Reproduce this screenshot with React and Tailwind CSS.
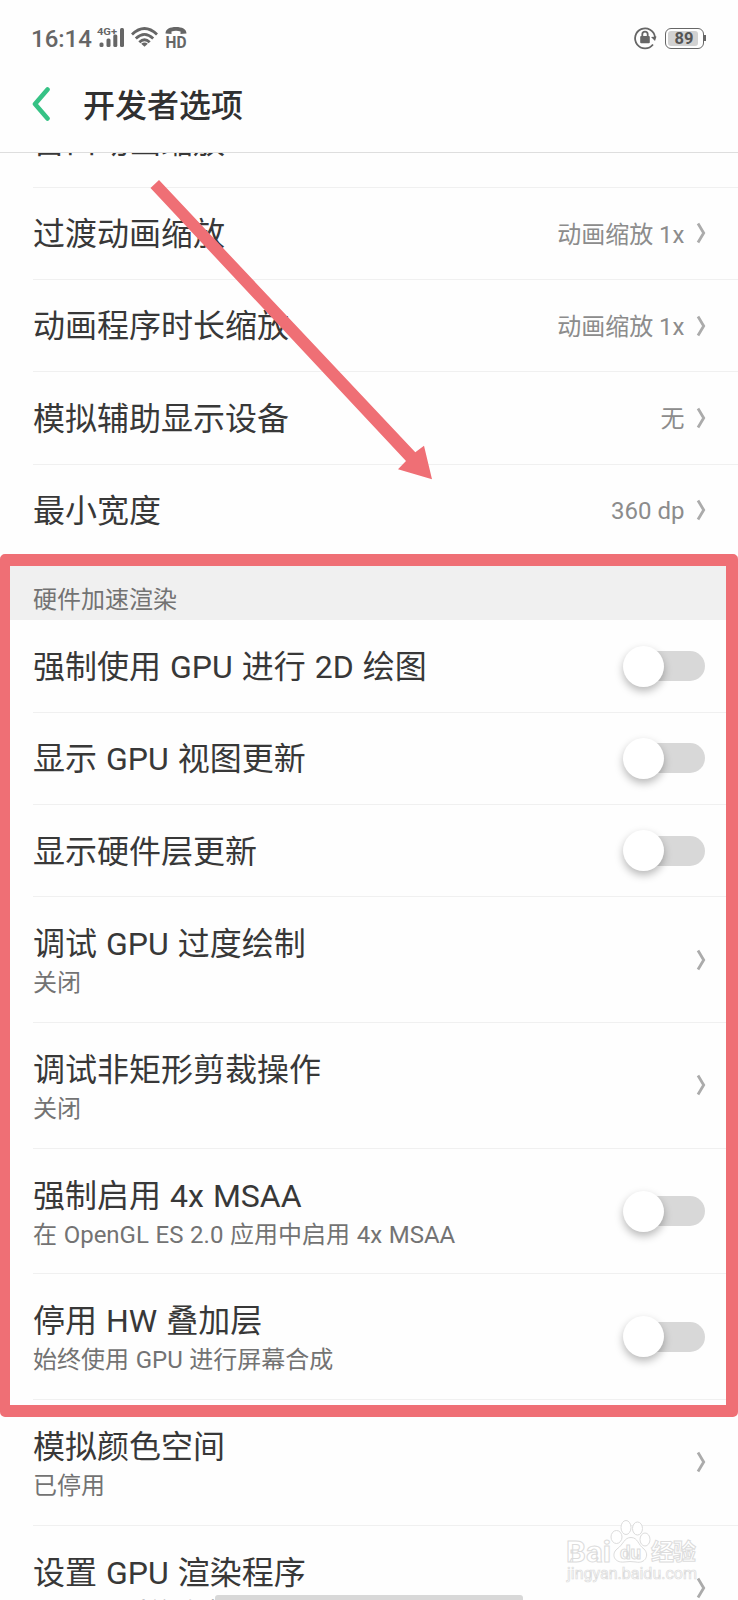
import React from "react";

const rows = [
   { title: "窗口动画缩放", value: "动画缩放 1x" },
   { title: "过渡动画缩放", value: "动画缩放 1x" },
   { title: "动画程序时长缩放", value: "动画缩放 1x" },
   { title: "模拟辅助显示设备", value: "无" },
   { title: "最小宽度", value: "360 dp" },
];

const switches = ["强制使用 GPU 进行 2D 绘图", "显示 GPU 视图更新", "显示硬件层更新"];

const details = [
   { title: "调试 GPU 过度绘制", sub: "关闭" },
   { title: "调试非矩形剪裁操作", sub: "关闭" },
   { title: "强制启用 4x MSAA", sub: "在 OpenGL ES 2.0 应用中启用 4x MSAA", toggle: true },
   { title: "停用 HW 叠加层", sub: "始终使用 GPU 进行屏幕合成", toggle: true },
   { title: "模拟颜色空间", sub: "已停用" },
   { title: "设置 GPU 渲染程序", sub: "OpenGL 系统默认" },
];

function Chevron() {
   return (
      <svg className="h-[22px] w-[10px] shrink-0" viewBox="0 0 10 22" fill="none" stroke="#ababab" strokeWidth="2.8">
         <path d="M2 1.5L7.7 11L2 20.5" />
      </svg>
   );
}

function Toggle() {
   return (
      <div className="mr-[0.5px] flex h-[30px] w-[82px] shrink-0 items-center">
         <div className="z-10 size-[41px] shrink-0 rounded-full bg-white shadow-[0_4px_8px_rgba(0,0,0,0.28)]" />
         <div className="-ml-[30px] h-[30px] w-[71px] rounded-full bg-[#d8d8d8]" />
      </div>
   );
}

function Row({ title, value, toggle }) {
   return (
      <div className="ml-[33px] flex h-[92.3px] shrink-0 items-center justify-between border-b border-[#f0f0f0] pr-[32.5px]">
         <div className="pt-[1.6px] text-[32px] leading-[40px] text-[#383838] [word-spacing:1.1px]">{title}</div>
         {toggle ? (
            <Toggle />
         ) : (
            <div className="flex items-center gap-[11px]">
               <span className="pt-[2.4px] text-[24px] leading-[32px] text-[#8c8c8c]">{value}</span>
               <Chevron />
            </div>
         )}
      </div>
   );
}

function DetailRow({ title, sub, toggle }) {
   return (
      <div className="ml-[33px] flex h-[125.7px] shrink-0 items-center justify-between border-b border-[#f0f0f0] pr-[32.5px]">
         <div className="pt-[3px]">
            <div className="text-[32px] leading-[44px] text-[#383838] [word-spacing:1.1px]">{title}</div>
            <div className="text-[24px] leading-[34px] text-[#737373] [word-spacing:0.7px]">{sub}</div>
         </div>
         {toggle ? <Toggle /> : <Chevron />}
      </div>
   );
}

function StatusBar() {
   return (
      <div className="flex h-[60px] items-end justify-between pr-[32px] pb-[6px] pl-[31px] text-[#666]">
         <div className="flex h-[32px] items-center">
            <span className="w-[60px] pt-[1px] text-[24px] leading-[32px] font-medium whitespace-nowrap">16:14</span>
            <svg className="ml-[5px] h-[30px] w-[96px]" viewBox="96 23 96 30" fill="currentColor">
               <text x="97" y="34.5" fontSize="9.5" fontWeight="700" textLength="20" lengthAdjust="spacingAndGlyphs">4G+</text>
               <rect x="99.5" y="42.5" width="4" height="4.5" rx="1.5" />
               <rect x="106.5" y="38.5" width="4" height="8.5" rx="1.5" />
               <rect x="113.3" y="34.5" width="4" height="12.5" rx="1.5" />
               <rect x="120" y="28" width="4" height="19" rx="1.5" />
               <g fill="none" stroke="currentColor" strokeWidth="2.8">
                  <path d="M132 34.5Q144.5 22.5 157 34.5" />
                  <path d="M135.8 38.5Q144.5 30.3 153.2 38.5" />
                  <path d="M139.3 42.2Q144.5 37.2 149.7 42.2" />
               </g>
               <path d="M141.2 43.8Q144.5 41.3 147.8 43.8L144.5 46.8Z" />
               <path d="M165.5 33.5C165.5 29 170 27 176 27S186.5 29 186.5 33.5L180.5 34V31.5Q176 30 171.5 31.5V34Z" />
               <text x="165.5" y="47.7" fontSize="17" fontWeight="700" textLength="21" lengthAdjust="spacingAndGlyphs">HD</text>
            </svg>
         </div>
         <div className="flex h-[32px] items-center gap-[8px]">
            <svg className="size-[24px]" viewBox="0 0 24 24" fill="none" stroke="currentColor" strokeWidth="1.8">
               <path d="M20 18.5A10 10 0 1 1 22 11" />
               <path d="M18 11L23.5 10.5L22 15Z" fill="currentColor" stroke="none" />
               <rect x="7.2" y="10" width="9.6" height="7.2" rx="1" fill="currentColor" stroke="none" />
               <path d="M9.3 10.5V8.3A2.7 2.7 0 0 1 14.7 8.3V10.5" />
            </svg>
            <div className="flex items-center">
               <div className="flex h-[21px] w-[39px] rounded-[6px] border-[1.5px] border-[#666] p-[2px]">
                  <div className="flex w-[30px] items-center justify-center rounded-[3px] bg-[#d2d2d2] pt-[2px] pl-[2px] text-[16.5px] leading-none font-bold text-[#555]">
                     89
                  </div>
               </div>
               <div className="h-[6px] w-[2px] bg-[#666]" />
            </div>
         </div>
      </div>
   );
}

function Watermark() {
   return (
      <svg
         className="absolute top-[1516px] left-[562px] h-[70px] w-[140px]"
         viewBox="562 1516 140 70"
         fill="#fff"
         stroke="#dcdcdc"
         strokeWidth="1"
      >
         <text x="566" y="1561.5" fontSize="30" fontWeight="700" textLength="45" lengthAdjust="spacingAndGlyphs">Bai</text>
         <ellipse cx="616.5" cy="1537" rx="5.5" ry="6.5" />
         <ellipse cx="626" cy="1527.5" rx="5" ry="7" />
         <ellipse cx="637.5" cy="1528.5" rx="5" ry="6.5" />
         <ellipse cx="645" cy="1539.5" rx="5" ry="6.5" />
         <path d="M631 1537.5C638 1537.5 638 1545 644 1549C650 1555 645 1564 636 1562Q630 1561 624 1562C614 1563 611 1554 617 1549C624 1544 624 1537.5 631 1537.5Z" />
         <text x="620" y="1559" fontSize="18" fontWeight="700" textLength="21" lengthAdjust="spacingAndGlyphs">du</text>
         <text x="651" y="1560" fontSize="23" fontWeight="700" textLength="45">经验</text>
         <text x="567" y="1579" fontSize="16" textLength="130" lengthAdjust="spacingAndGlyphs" strokeWidth="0.7">jingyan.baidu.com</text>
      </svg>
   );
}

export default function App() {
   return (
      <div className="relative flex h-[1600px] w-[738px] flex-col overflow-hidden bg-[#fefefe] font-[Roboto,'Noto_Sans_CJK_SC',sans-serif]">
         <header className="flex h-[153px] shrink-0 flex-col border-b border-[#dedede]">
            <StatusBar />
            <div className="flex h-[88px] items-center pl-[32px]">
               <svg className="h-[34px] w-[19px]" viewBox="0 0 19 34" fill="none" stroke="#36c285" strokeWidth="4.6" strokeLinecap="round" strokeLinejoin="round">
                  <path d="M15.5 2.5L3 17L15.5 31.5" />
               </svg>
               <h1 className="ml-[32px] pt-[3px] text-[32px] leading-[40px] font-medium text-[#303030]">开发者选项</h1>
            </div>
         </header>

         <main className="min-h-0 flex-1 overflow-hidden">
            <div className="-mt-[57.6px] flex flex-col">
               {rows.map((row) => (
                  <Row key={row.title} {...row} />
               ))}
               <div className="flex h-[63.6px] shrink-0 items-end bg-[#f0f0f0] pb-[3px] pl-[33px] text-[24px] leading-[34px] text-[#737373]">
                  硬件加速渲染
               </div>
               {switches.map((title) => (
                  <Row key={title} title={title} toggle />
               ))}
               {details.map((row) => (
                  <DetailRow key={row.title} {...row} />
               ))}
            </div>
         </main>

         <div className="absolute top-[554px] left-0 h-[863px] w-[738px] rounded-[5px] border-y-[12px] border-r-[12px] border-l-[10px] border-[#ef6f75]" />
         <svg className="absolute top-[170px] left-[140px] h-[320px] w-[300px]" viewBox="140 170 300 320" fill="#ef6f75">
            <path d="M150.5 188L159 180L415.3 452.3L424 445.7L432 479.3L398 469.3L406 461Z" />
         </svg>
         <Watermark />
         <div className="absolute top-[1595px] left-[215px] h-[5px] w-[308px] rounded-t-[3px] bg-[#d8d8d8]" />
      </div>
   );
}
